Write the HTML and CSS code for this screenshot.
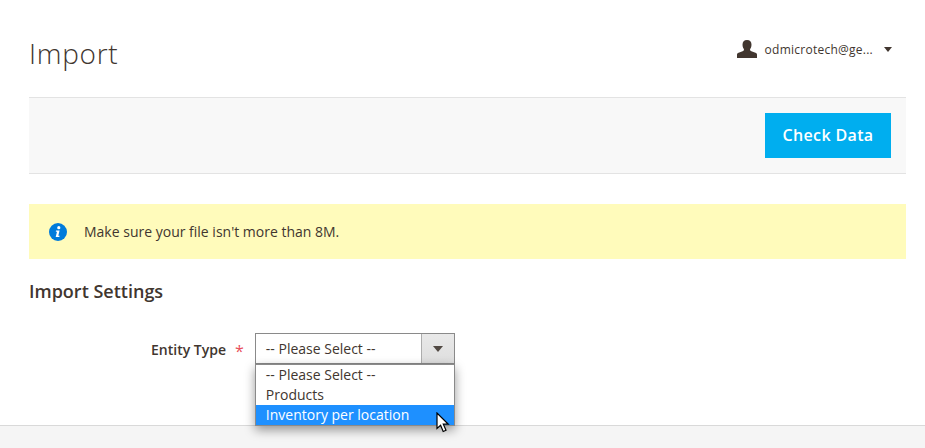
FILE: index.html
```html
<!DOCTYPE html>
<html lang="en">
<head>
  <meta charset="UTF-8">
  <title>Import</title>
  <link rel="stylesheet" href="styles.css">
</head>
<body>

  <div class="page">
    <!-- Header -->
    <header class="page-header">
      <h1>Import</h1>
      <div class="user">
        <svg class="user-icon" width="20" height="18" viewBox="0 0 20 18">
          <path d="M0 18v-3.200c0-1 .6-1.600 1.600-2l4.600-1.900c.6-.3.8-.8.8-1.300 0-.5-.5-1-.8-1.600-.4-.8-.7-1.800-.7-3.200C5.500 2 7 0 10 0s4.500 2 4.500 4.800c0 1.400-.3 2.400-.7 3.200-.3.6-.8 1.100-.8 1.600s.2 1 .8 1.300l4.600 1.900c1 .4 1.600 1 1.600 2V18z"/>
        </svg>
        <span class="user-name">odmicrotech@ge...</span>
        <span class="caret"></span>
      </div>
    </header>

    <!-- Actions -->
    <div class="actions">
      <button class="btn-primary">Check Data</button>
    </div>

    <!-- Message -->
    <div class="message">
      <svg class="info-icon" width="18" height="18" viewBox="0 0 18 18">
        <circle cx="9" cy="9" r="9" fill="#007bdb"/>
        <circle cx="9.800" cy="4.700" r="1.600" fill="#fff"/>
        <path d="M7 7.600h3.600l-1.300 5.200h1.300l-.3 1.200H6.700l1.300-5.200H6.800z" fill="#fff"/>
      </svg>
      <span>Make sure your file isn't more than 8M.</span>
    </div>

    <h2>Import Settings</h2>

    <!-- Form -->
    <div class="field">
      <label class="field-label">Entity Type</label>
      <span class="required">*</span>
      <div class="select-wrap">
        <div class="select">
          <span class="select-value">-- Please Select --</span>
          <span class="select-btn"><span class="caret"></span></span>
        </div>
        <ul class="select-list">
          <li>-- Please Select --</li>
          <li>Products</li>
          <li class="selected">Inventory per location</li>
        </ul>
        <svg class="pointer" width="14" height="21" viewBox="0 0 14 21">
          <path d="M1 1v15.500l3.600-3.300 2.600 6.300 2.800-1.200-2.700-6.100h5z" fill="#fff" stroke="#000" stroke-width="1.200"/>
        </svg>
      </div>
    </div>
  </div>

  <div class="page-footer"></div>

</body>
</html>
```

FILE: styles.css
```css
* {
  box-sizing: border-box;
}

html, body {
  height: 100%;
}

body {
  margin: 0;
  background-color: #fff;
  color: #41362f;
  font-family: "Open Sans", sans-serif;
  font-size: 14px;
  display: flex;
  flex-direction: column;
  overflow: hidden;
}

.page {
  height: 425px;
  padding: 0 19px 0 29px;
}

.page-header {
  height: 97px;
  display: flex;
  align-items: flex-start;
  justify-content: space-between;
}

h1 {
  margin: 33px 0 0;
  font-size: 28px;
  line-height: 40px;
  font-weight: 300;
  letter-spacing: .7px;
}

.user {
  display: flex;
  align-items: center;
  margin: 39px 14px 0 0;
  height: 20px;
}

.user-icon {
  fill: #41362f;
  margin-right: 8px;
}

.user-name {
  font-size: 12px;
  letter-spacing: .25px;
  margin-right: 11px;
}

.caret {
  display: block;
  width: 0;
  height: 0;
  border-left: 4px solid transparent;
  border-right: 4px solid transparent;
  border-top: 5px solid #41362f;
}

.actions {
  height: 77px;
  background-color: #f8f8f8;
  border-top: 1px solid #e3e3e3;
  border-bottom: 1px solid #e3e3e3;
  padding: 15px;
  display: flex;
  justify-content: flex-end;
}

.btn-primary {
  width: 126px;
  height: 45px;
  padding-bottom: 2px;
  border: none;
  background-color: #00aeef;
  color: #fff;
  font-family: "Open Sans", sans-serif;
  font-size: 16px;
  font-weight: 600;
  letter-spacing: .35px;
}

.message {
  margin-top: 30px;
  height: 55px;
  background-color: #fffbbb;
  display: flex;
  align-items: center;
  padding-left: 20px;
  gap: 17px;
}

h2 {
  margin: 20px 0 0;
  font-size: 18px;
  line-height: 24px;
  font-weight: 600;
}

.field {
  margin-top: 30px;
  display: flex;
  align-items: flex-start;
}

.field-label {
  margin-left: 122px;
  margin-top: 7px;
  line-height: 20px;
  font-weight: 600;
  font-size: 14px;
}

.required {
  margin: 8px 11px 0 9px;
  line-height: 20px;
  color: #e8505b;
  font-size: 16px;
}

.select-wrap {
  position: relative;
  width: 200px;
}

.select {
  height: 31px;
  border: 1px solid #8a8a8a;
  display: flex;
  background-color: #fff;
}

.select-value {
  flex: 1;
  padding-left: 10px;
  line-height: 29px;
}

.select-btn {
  width: 33px;
  border-left: 1px solid #adadad;
  background: linear-gradient(#e9e9e9, #dedede);
  display: flex;
  align-items: center;
  justify-content: center;
}

.select-btn .caret {
  border-left-width: 5px;
  border-right-width: 5px;
  border-top: 6px solid #514943;
}

.select-list {
  position: absolute;
  top: 31px;
  left: 0;
  width: 200px;
  margin: 0;
  padding: 0;
  list-style: none;
  background-color: #fff;
  border: 1px solid #8a8a8a;
  box-shadow: 0 4px 10px rgba(0, 0, 0, .4);
}

.select-list li {
  height: 20px;
  line-height: 20px;
  padding-left: 10px;
}

.select-list .selected {
  background-color: #1e90ff;
  color: #fff;
}

.pointer {
  position: absolute;
  top: 79px;
  left: 181px;
}

.page-footer {
  flex: 1;
  background-color: #f5f5f5;
  border-top: 1px solid #d9d9d9;
}
```
